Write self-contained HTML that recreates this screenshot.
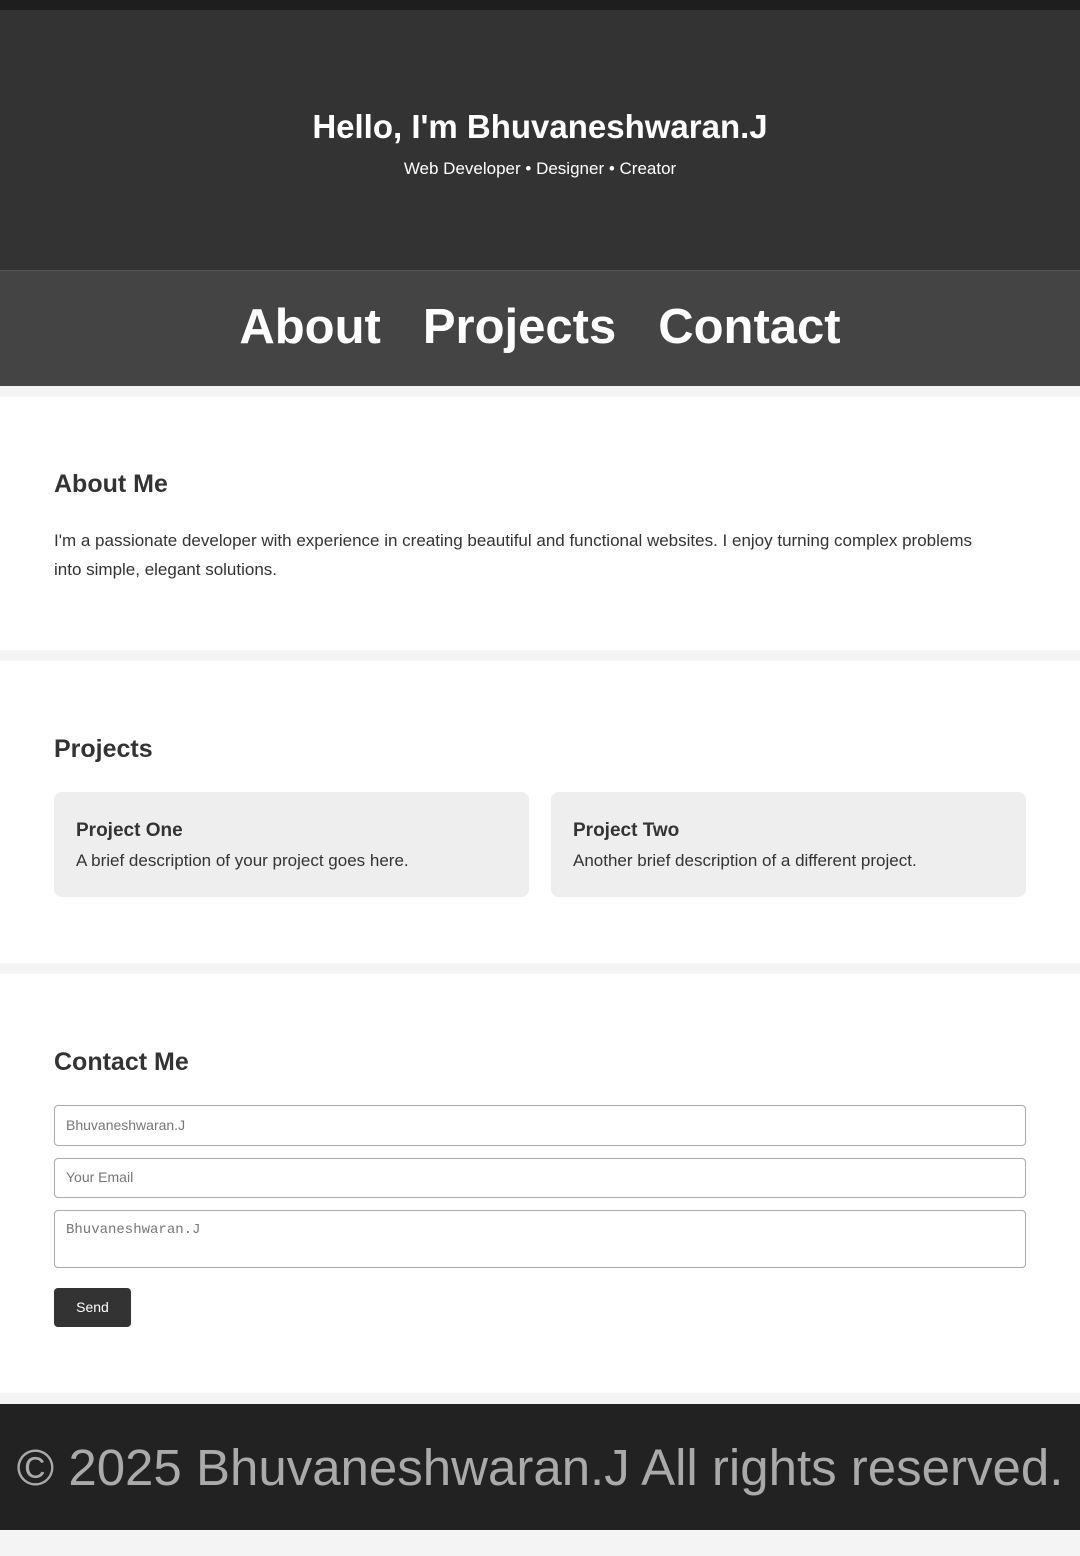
<!DOCTYPE html>
<html><head><meta charset="utf-8"><style>
*{box-sizing:border-box;margin:0;padding:0}
body{width:1080px;height:1556px;background:#f4f4f4;font-family:"Liberation Sans",sans-serif;color:#333;position:relative;overflow:hidden}
.abs{position:absolute;left:0;width:1080px}
.t{position:absolute;white-space:nowrap}
.sec{background:#fff}
.card{position:absolute;top:792px;height:105px;width:475px;background:#eee;border-radius:8px}
.inp{position:absolute;left:54px;width:972px;border:1px solid #aaa;border-radius:4px;background:#fff;font-size:14px;color:#777;padding-left:11px}
</style></head><body>
<div class="abs" style="top:0;height:10px;background:#1e1e1e"></div>
<div class="abs" style="top:10px;height:260px;background:#333"></div>
<div class="t" style="left:0;width:1080px;text-align:center;top:108px;font-size:33px;font-weight:bold;color:#fff">Hello, I'm Bhuvaneshwaran.J</div>
<div class="t" style="left:0;width:1080px;text-align:center;top:159px;font-size:17px;color:#fff">Web Developer • Designer • Creator</div>
<div class="abs" style="top:270px;height:116px;background:#444;border-top:1px solid #555"></div>
<div class="t" style="left:0;width:1080px;text-align:center;top:299px;font-size:49px;font-weight:bold;color:#fff"><span style="margin-right:42px">About</span><span style="margin-right:42px">Projects</span><span>Contact</span></div>
<div class="abs sec" style="top:397px;height:253px"></div>
<div class="t" style="left:54px;top:470px;font-size:25px;font-weight:bold">About Me</div>
<div class="t" style="left:54px;top:526px;font-size:17px;line-height:29px;white-space:normal;width:940px">I'm a passionate developer with experience in creating beautiful and functional websites. I enjoy turning complex problems into simple, elegant solutions.</div>
<div class="abs sec" style="top:661px;height:302px"></div>
<div class="t" style="left:54px;top:735px;font-size:25px;font-weight:bold">Projects</div>
<div class="card" style="left:54px"><div class="t" style="left:22px;top:28px;font-size:19px;font-weight:bold">Project One</div><div class="t" style="left:22px;top:59px;font-size:17px">A brief description of your project goes here.</div></div>
<div class="card" style="left:551px"><div class="t" style="left:22px;top:28px;font-size:19px;font-weight:bold">Project Two</div><div class="t" style="left:22px;top:59px;font-size:17px">Another brief description of a different project.</div></div>
<div class="abs sec" style="top:974px;height:419px"></div>
<div class="t" style="left:54px;top:1048px;font-size:25px;font-weight:bold">Contact Me</div>
<div class="inp" style="top:1105px;height:41px;line-height:38px">Bhuvaneshwaran.J</div>
<div class="inp" style="top:1158px;height:40px;line-height:37px">Your Email</div>
<div class="inp" style="top:1210px;height:58px;font-family:'Liberation Mono',monospace;font-size:14px;padding-top:11px">Bhuvaneshwaran.J</div>
<div class="t" style="left:54px;top:1288px;width:77px;height:39px;background:#333;border-radius:4px;color:#fff;font-size:14px;text-align:center;line-height:39px">Send</div>
<div class="abs" style="top:1404px;height:126px;background:#222"></div>
<div class="t" style="left:0;width:1080px;text-align:center;top:1438px;font-size:51px;color:#aaa">© 2025 Bhuvaneshwaran.J All rights reserved.</div>
</body></html>
